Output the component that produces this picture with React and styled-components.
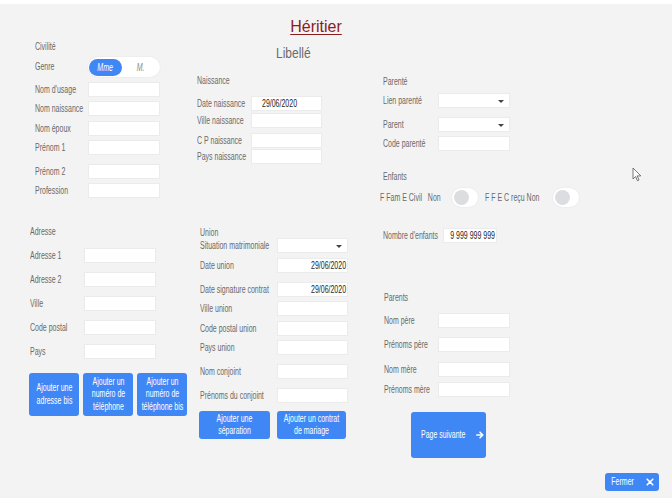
import React from "react";
import styled, { createGlobalStyle } from "styled-components";

const FONT = `"Liberation Sans", Arial, sans-serif`;
const BLUE = "#3f87f5";
const SX = 0.7;

const Global = createGlobalStyle`
  html, body { margin: 0; padding: 0; background: #ffffff; }
  body { font-family: ${FONT}; }
  * { box-sizing: border-box; }
`;

const Page = styled.div`
  position: relative;
  width: 672px;
  height: 494px;
  margin-top: 4px;
  background: #f3f3f3;
  overflow: hidden;
  font-family: ${FONT};
  color: #666;
  display: flex;
  flex-direction: column;
`;

/* condensed text run: the reference uses a narrow face */
const Cond = styled.span`
  display: inline-block;
  flex: none;
  white-space: ${(p) => (p.$wrap ? "normal" : "nowrap")};
  width: ${(p) => (p.$w ? `${p.$w}px` : "auto")};
  transform: scaleX(${(p) => p.$sx || SX});
  transform-origin: ${(p) => p.$origin || "left"} center;
  text-align: ${(p) => (p.$wrap ? "center" : "inherit")};
`;

const Header = styled.div`
  display: flex;
  justify-content: center;
  padding: 15px 40px 0 0;
  height: 34px;
  flex: none;
`;

const Title = styled.h1`
  margin: 0;
  font-size: 16px;
  line-height: 16px;
  font-weight: normal;
  color: #8b1c1c;
  text-decoration: underline;
  text-underline-offset: 2px;
  text-decoration-thickness: 1px;
`;

const Columns = styled.div`
  display: flex;
  align-items: flex-start;
  padding-left: 29px;
`;

const Column = styled.div`
  display: flex;
  flex-direction: column;
  width: ${(p) => p.$w}px;
  margin-left: ${(p) => p.$ml || 0}px;
`;

const Subtitle = styled.div`
  margin-top: 6px;
  padding-left: ${(p) => p.$pl}px;
  font-size: 15px;
  line-height: 18px;
  color: #6a6a6a;
`;

const Heading = styled.div`
  margin-top: ${(p) => p.$mt}px;
  padding-left: ${(p) => p.$pl || 0}px;
  font-size: 10px;
  line-height: ${(p) => p.$lh || 12}px;
  height: ${(p) => p.$lh || 12}px;
  color: #6a6a6a;
`;

const Row = styled.div`
  display: flex;
  align-items: center;
  margin-top: ${(p) => p.$mt}px;
  padding-left: ${(p) => p.$pl || 0}px;
  height: ${(p) => p.$h || 15}px;
`;

const Label = styled.span`
  width: ${(p) => p.$w}px;
  flex: none;
  font-size: 10px;
  line-height: 12px;
  color: #6a6a6a;
  white-space: nowrap;
  overflow: visible;
`;

const Field = styled.div`
  width: ${(p) => p.$w || 72}px;
  height: 15px;
  flex: none;
  background: #fff;
  border: 1px solid #ebebeb;
  display: flex;
  align-items: center;
  justify-content: ${(p) => (p.$right ? "flex-end" : "flex-start")};
  padding: ${(p) => (p.$right ? "0 1px 0 0" : "0 0 0 10px")};
  font-size: 10px;
  color: #1e1e1e;
  position: relative;
`;

const Caret = styled.span`
  position: absolute;
  right: 5px;
  top: 6px;
  width: 0;
  height: 0;
  border-left: 3px solid transparent;
  border-right: 3px solid transparent;
  border-top: 3px solid #444;
`;

const Segmented = styled.div`
  display: flex;
  align-items: center;
  width: 72px;
  height: 20px;
  padding: 1px;
  background: #fff;
  border-radius: 10px;
  box-shadow: 0 0 2px rgba(0, 0, 0, 0.08);
`;

const SegOption = styled.span`
  width: ${(p) => (p.$active ? 33 : 37)}px;
  height: 17px;
  border-radius: 9px;
  display: flex;
  align-items: center;
  justify-content: center;
  font-size: 10px;
  font-style: italic;
  color: ${(p) => (p.$active ? "#fff" : "#8a8a8a")};
  background: ${(p) => (p.$active ? BLUE : "transparent")};
`;

const Switch = styled.span`
  display: inline-flex;
  align-items: center;
  width: 26px;
  height: 19px;
  padding: 2px;
  border-radius: 10px;
  background: #fff;
  box-shadow: 0 0 2px rgba(0, 0, 0, 0.08);
  flex: none;
  &::before {
    content: "";
    width: 15px;
    height: 15px;
    border-radius: 50%;
    background: #dcdde0;
  }
`;

const SwitchLabel = styled.span`
  font-size: 10px;
  color: #6a6a6a;
  white-space: nowrap;
  width: ${(p) => p.$w}px;
  margin-left: ${(p) => p.$ml || 0}px;
  flex: none;
`;

const ButtonRow = styled.div`
  display: flex;
  gap: ${(p) => p.$gap}px;
  margin-top: ${(p) => p.$mt}px;
  padding-left: ${(p) => p.$pl || 0}px;
`;

const Button = styled.button`
  width: ${(p) => p.$w}px;
  height: ${(p) => p.$h}px;
  flex: none;
  border: none;
  border-radius: 3px;
  background: ${BLUE};
  color: #fff;
  font-family: ${FONT};
  font-size: 10px;
  line-height: 12.5px;
  padding: 0 0 0 ${(p) => p.$pl || 0}px;
  display: flex;
  align-items: center;
  justify-content: center;
  cursor: pointer;
`;

const Footer = styled.div`
  margin-top: auto;
  display: flex;
  justify-content: flex-end;
  padding: 0 13px 7px 0;
`;

const Cursor = styled.svg`
  position: absolute;
  left: 632px;
  top: 163px;
`;

function TextField({ label, lw, mt, fw, value, right, select, pl }) {
  return (
    <Row $mt={mt} $pl={pl}>
      <Label $w={lw}>
        <Cond>{label}</Cond>
      </Label>
      <Field $w={fw} $right={right}>
        {value && <Cond $origin={right ? "right" : "left"}>{value}</Cond>}
        {select && <Caret />}
      </Field>
    </Row>
  );
}

function WrapButton({ w, h, inner, children }) {
  return (
    <Button $w={w} $h={h}>
      <Cond $wrap $w={Math.round(inner / SX)} $origin="center">
        {children}
      </Cond>
    </Button>
  );
}

export default function App() {
  return (
    <>
      <Global />
      <Page>
        <Header>
          <Title>Héritier</Title>
        </Header>
        <Columns>
          {/* Column 1 : Civilité + Adresse */}
          <Column $w={158}>
            <Heading $mt={3} $pl={6}><Cond>Civilité</Cond></Heading>
            <Row $mt={4} $h={20} $pl={6}>
              <Label $w={53}><Cond>Genre</Cond></Label>
              <Segmented>
                <SegOption $active><Cond $origin="center">Mme</Cond></SegOption>
                <SegOption><Cond $origin="center">M.</Cond></SegOption>
              </Segmented>
            </Row>
            <TextField pl={6} lw={53} mt={5} label="Nom d'usage" />
            <TextField pl={6} lw={53} mt={4} label="Nom naissance" />
            <TextField pl={6} lw={53} mt={5} label="Nom époux" />
            <TextField pl={6} lw={53} mt={4} label="Prénom 1" />
            <TextField pl={6} lw={53} mt={9} label="Prénom 2" />
            <TextField pl={6} lw={53} mt={4} label="Profession" />

            <Heading $mt={28} $pl={1}><Cond>Adresse</Cond></Heading>
            <TextField pl={1} lw={54} mt={10} label="Adresse 1" />
            <TextField pl={1} lw={54} mt={9} label="Adresse 2" />
            <TextField pl={1} lw={54} mt={9} label="Ville" />
            <TextField pl={1} lw={54} mt={9} label="Code postal" />
            <TextField pl={1} lw={54} mt={9} label="Pays" />
            <ButtonRow $gap={4} $mt={14}>
              <WrapButton w={50} h={43} inner={48}>Ajouter une adresse bis</WrapButton>
              <WrapButton w={50} h={43} inner={48}>Ajouter un numéro de téléphone</WrapButton>
              <WrapButton w={50} h={43} inner={48}>Ajouter un numéro de téléphone bis</WrapButton>
            </ButtonRow>
          </Column>

          {/* Column 2 : Libellé, Naissance, Union */}
          <Column $w={155} $ml={10}>
            <Subtitle $pl={79}><Cond $sx={0.8}>Libellé</Cond></Subtitle>
            <Heading $mt={13}><Cond>Naissance</Cond></Heading>
            <TextField lw={54} fw={71} mt={9} label="Date naissance" value="29/06/2020" />
            <TextField lw={54} fw={71} mt={2} label="Ville naissance" />
            <TextField lw={54} fw={71} mt={5} label="C P naissance" />
            <TextField lw={54} fw={71} mt={1} label="Pays naissance" />

            <Heading $mt={64} $pl={3} $lh={10}><Cond>Union</Cond></Heading>
            <TextField pl={3} lw={77} fw={71} mt={0} label="Situation matrimoniale" select />
            <TextField pl={3} lw={77} fw={71} mt={5} label="Date union" value="29/06/2020" right />
            <TextField pl={3} lw={77} fw={71} mt={9} label="Date signature contrat" value="29/06/2020" right />
            <TextField pl={3} lw={77} fw={71} mt={4} label="Ville union" />
            <TextField pl={3} lw={77} fw={71} mt={5} label="Code postal union" />
            <TextField pl={3} lw={77} fw={71} mt={4} label="Pays union" />
            <TextField pl={3} lw={77} fw={71} mt={9} label="Nom conjoint" />
            <TextField pl={3} lw={77} fw={71} mt={9} label="Prénoms du conjoint" />
            <ButtonRow $gap={7} $mt={8} $pl={2}>
              <WrapButton w={71} h={28} inner={58}>Ajouter une séparation</WrapButton>
              <WrapButton w={69} h={28} inner={61}>Ajouter un contrat de mariage</WrapButton>
            </ButtonRow>
          </Column>

          {/* Column 3 : Parenté, Enfants, Parents */}
          <Column $w={200} $ml={28}>
            <Heading $mt={38} $pl={3}><Cond>Parenté</Cond></Heading>
            <TextField pl={3} lw={55} mt={5} label="Lien parenté" select />
            <TextField pl={3} lw={55} mt={9} label="Parent" select />
            <TextField pl={3} lw={55} mt={4} label="Code parenté" />

            <Heading $mt={20} $pl={3}><Cond>Enfants</Cond></Heading>
            <Row $mt={5} $h={19}>
              <SwitchLabel $w={72}><Cond>F Fam E Civil&nbsp;&nbsp;&nbsp;Non</Cond></SwitchLabel>
              <Switch />
              <SwitchLabel $w={68} $ml={7}><Cond>F F E C reçu Non</Cond></SwitchLabel>
              <Switch />
            </Row>
            <Row $mt={21} $pl={3}>
              <Label $w={60}><Cond>Nombre d'enfants</Cond></Label>
              <Field $w={54} $right><Cond $origin="right">9 999 999 999</Cond></Field>
            </Row>

            <Heading $mt={49} $pl={4}><Cond>Parents</Cond></Heading>
            <TextField pl={4} lw={54} mt={9} label="Nom père" />
            <TextField pl={4} lw={54} mt={9} label="Prénoms père" />
            <TextField pl={4} lw={54} mt={10} label="Nom mère" />
            <TextField pl={4} lw={54} mt={5} label="Prénoms mère" />
            <ButtonRow $gap={0} $mt={15} $pl={31}>
              <Button $w={75} $h={46} $pl={8}>
                <Cond $w={58} $origin="left">Page suivante</Cond>
                <svg width="8" height="8" viewBox="0 0 10 10" style={{ marginLeft: -3 }}>
                  <path d="M1 5h7M5 1.5L8.5 5 5 8.5" stroke="#fff" strokeWidth="2" fill="none" strokeLinecap="round" strokeLinejoin="round" />
                </svg>
              </Button>
            </ButtonRow>
          </Column>
        </Columns>

        <Footer>
          <Button $w={54} $h={18}>
            <Cond $w={36} $origin="left">Fermer</Cond>
            <svg width="8" height="8" viewBox="0 0 10 10">
              <path d="M1.5 1.5l7 7M8.5 1.5l-7 7" stroke="#fff" strokeWidth="2" strokeLinecap="round" />
            </svg>
          </Button>
        </Footer>

        <Cursor width="10" height="15" viewBox="0 0 10 15">
          <path d="M1 1v11l2.6-2.5 1.8 4.2 1.6-.7-1.8-4.1H8.8z" fill="#fff" stroke="#555" strokeWidth="0.8" strokeLinejoin="round" />
        </Cursor>
      </Page>
    </>
  );
}
